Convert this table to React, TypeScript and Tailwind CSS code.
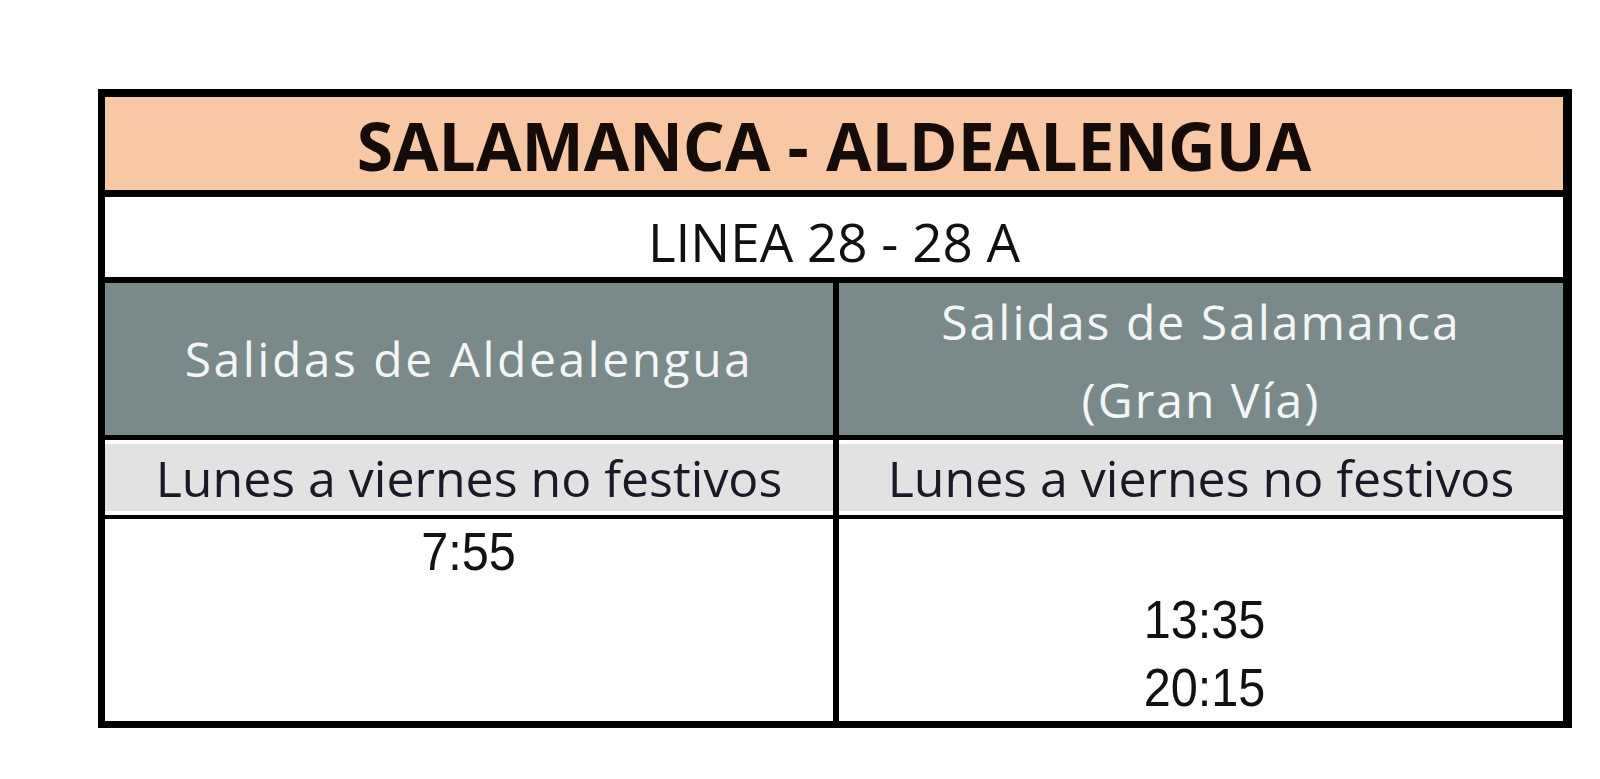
import React from "react";

const sans = "font-['Open_Sans','Noto_Sans',sans-serif]";

export default function App() {
  return (
    <div className="w-[1600px] h-[779px] bg-white pt-[89px] pl-[98px]">
      <div className="w-[1474px] flex flex-col border-t-8 border-l-[7px] border-r-[9px] border-b-[7px] border-black bg-white">
        {/* Title */}
        <div className="h-[100px] flex items-center justify-center pt-[3px] bg-[#f8c8a5] border-b-[7px] border-black">
          <span className={`${sans} font-bold text-[66px] leading-none text-[#150c0a]`}>
            SALAMANCA - ALDEALENGUA
          </span>
        </div>
        {/* Linea */}
        <div className="h-[86px] flex items-center justify-center pt-[9px] bg-white border-b-[6px] border-black">
          <span className={`${sans} text-[53px] leading-none text-[#111111]`}>LINEA 28 - 28 A</span>
        </div>
        {/* Column headers */}
        <div className="grid grid-cols-[734px_724px] border-b-[5px] border-black">
          <div className="h-[152px] flex items-center justify-center bg-[#7a898a] border-r-[6px] border-black">
            <span className={`${sans} text-[48px] leading-none tracking-[2.5px] text-[#f3f6f6]`}>
              Salidas de Aldealengua
            </span>
          </div>
          <div className="h-[152px] flex flex-col items-center justify-center bg-[#7a898a] pt-[4px]">
            <span className={`${sans} text-[48px] leading-[78px] tracking-[2px] text-[#f3f6f6]`}>
              Salidas de Salamanca
            </span>
            <span className={`${sans} text-[48px] leading-[78px] tracking-[2px] text-[#f3f6f6]`}>
              (Gran Vía)
            </span>
          </div>
        </div>
        {/* Sub headers */}
        <div className="grid grid-cols-[734px_724px] border-b-[4px] border-black">
          <div className="h-[75px] flex flex-col bg-white border-r-[6px] border-black py-[4px]">
            <div className="flex-1 flex items-center justify-center bg-[#e2e2e2]">
              <span className={`${sans} text-[50px] leading-none text-[#1a1a26]`}>Lunes a viernes no festivos</span>
            </div>
          </div>
          <div className="h-[75px] flex flex-col bg-white py-[4px]">
            <div className="flex-1 flex items-center justify-center bg-[#e2e2e2]">
              <span className={`${sans} text-[50px] leading-none text-[#1a1a26]`}>Lunes a viernes no festivos</span>
            </div>
          </div>
        </div>
        {/* Body */}
        <div className="grid grid-cols-[734px_724px]">
          <div className="h-[202px] flex flex-col items-center bg-white border-r-[6px] border-black font-['Liberation_Sans',Arial,sans-serif] text-[54px] leading-[68px] text-[#111111]">
            <span className="inline-block scale-x-[0.9] -translate-y-[2px]">7:55</span>
          </div>
          <div className="h-[202px] flex flex-col items-center bg-white font-['Liberation_Sans',Arial,sans-serif] text-[54px] leading-[68px] text-[#111111]">
            <span className="inline-block h-[68px]">&nbsp;</span>
            <span className="inline-block scale-x-[0.9] translate-x-[4px] -translate-y-[2px]">13:35</span>
            <span className="inline-block scale-x-[0.9] translate-x-[4px] -translate-y-[2px]">20:15</span>
          </div>
        </div>
      </div>
    </div>
  );
}
